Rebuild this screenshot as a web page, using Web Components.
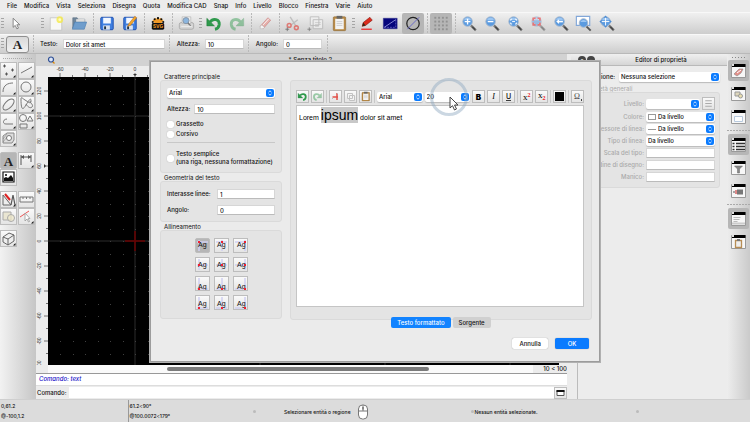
<!DOCTYPE html>
<html lang="it">
<head>
<meta charset="utf-8">
<title>Editor CAD</title>
<style>
html, body { margin: 0; height: 100%; }
body { font: 500 6px/8px Inter, "Liberation Sans", sans-serif; color: #111; background: #ebebeb; overflow: hidden; }
</style>
</head>
<body>
<cad-app></cad-app>
<script>
const lens = (inner, o = 1) => `<g opacity="${o}"><path d="M13 13l5.200 5.200" stroke="#777" stroke-width="2.400"/><path d="M14.500 14.500l3 3" stroke="#444" stroke-width="1.400"/><circle cx="9.500" cy="9" r="5" fill="#5b9be0" stroke="#a9b9cc" stroke-width="1"/><path d="M5.500 7.500a4.300 4.300 0 0 1 8 0z" fill="#9cc6f2"/>${inner}</g>`;
const win = inner => `<path d="M3.500 4.500h14v13h-14z" fill="#f7f7f7" stroke="#999"/><path d="M4 4h13.500v3H4z" fill="#000"/><path d="M4 4h2v2H4z" fill="#ddd"/>${inner}`;
const tick = '<path d="M15.500 13v2.500H13z" fill="#111"/>';
const line = (d, w = 1, c = '#777') => `<path d="${d}" fill="none" stroke="${c}" stroke-width="${w}"/>`;
const green = (d, head) => `<path d="${d}" fill="none" stroke="#2f9a4c" stroke-width="3"/><path d="${head}" fill="#2f9a4c" stroke="#1f7a39" stroke-width=".5"/>`;
const undo = green('M7 9.500c3-4.500 10-3 9.500 2.500c-.3 2.500-2 4.500-4.500 5', 'M3.500 5.500v8h8z');
const clip = '<rect x="5" y="4" width="13" height="14.500" rx="1" fill="#b98a45" stroke="#8a6530" stroke-width=".6"/><path d="M7 6h9v11H7z" fill="#f3f3f3"/><path d="M8.500 3h6v3h-6z" fill="#666"/>' + line('M8.500 9h6M8.500 11h6M8.500 13h6', .5, '#aaa');
const floppy = '<rect x="4.500" y="4.500" width="13" height="13" rx="1" fill="#3f7fe0" stroke="#1d4fae"/><path d="M7 5h8v6H7z" fill="#f2f7ff"/><path d="M7 13h7v4.500H7z" fill="#dbe3ef"/><path d="M8 14h2v3H8z" fill="#234"/>';
const scissors = c => line('M8 4l6 9.500M16 7L9 12.500', 1.400, '#b0b0b0') + `<g fill="none" stroke="${c}" stroke-width="1.600"><circle cx="7" cy="13" r="2"/><circle cx="14.500" cy="15.500" r="2"/></g>`;
const ICONS = {
  pointer: ['0 0 22 22', '<path d="M8 5.500v9.500l2.200-2 1.700 3.600 1.700-.8-1.700-3.500h3z" fill="#fff" stroke="#777" stroke-width=".9"/>'],
  new: ['0 0 22 22', '<path d="M5 5h12v13H5z" fill="#f8f8f6" stroke="#bbb" stroke-width=".7"/><circle cx="15" cy="7" r="3.500" fill="#f5ea48" opacity=".8"/><circle cx="15" cy="7" r="1.500" fill="#fffbc0"/>'],
  open: ['0 0 22 22', '<path d="M4.500 16V5h4.500l1 1.500h7V10H7z" fill="#72879b" stroke="#566b80" stroke-width=".6"/><path d="M8 6.500l9-.5v4H8z" fill="#ddd"/><path d="M6.500 9.500H19L16.500 17H4z" fill="#6f9dcc" stroke="#4779ac" stroke-width=".6"/>'],
  save: ['0 0 22 22', floppy],
  saveas: ['0 0 22 22', floppy + '<path d="M8.500 14l1-2.500 6.500-8 2 1.500-6.500 8z" fill="#f3a72c" stroke="#a85c10" stroke-width=".5"/>'],
  svg: ['0 0 22 22', '<g stroke="#f09a25" stroke-width="2.200" stroke-linecap="round"><path d="M11 12V6M11 12L6.500 8M11 12l4.500-4M11 12L8.500 6.500M11 12l2.500-5.500"/></g><g fill="#111"><circle cx="11" cy="5.500" r="1.200"/><circle cx="7.500" cy="6.500" r="1.100"/><circle cx="14.500" cy="6.500" r="1.100"/><circle cx="5.500" cy="9.500" r="1.100"/><circle cx="16.500" cy="9.500" r="1.100"/></g><rect x="4.500" y="10.500" width="13" height="7" rx="1.500" fill="#111"/><text x="11" y="16" text-anchor="middle" font-size="5" font-weight="700" fill="#f09a25">SVG</text>'],
  print: ['0 0 22 22', '<rect x="4" y="10" width="15" height="7" rx="2" fill="#d5d5d5" stroke="#999" stroke-width=".7"/><path d="M7 4h9v7H7z" fill="#f0f0f0" stroke="#aaa" stroke-width=".6"/><circle cx="11" cy="8" r="3.200" fill="#8bb5de" stroke="#8795a5"/><path d="M13 10.500l3 3" stroke="#777" stroke-width="1.400"/><path d="M6 14h11" stroke="#eee"/>'],
  undo: ['0 0 22 22', undo],
  redo: ['0 0 22 22', `<g transform="matrix(-1 0 0 1 21.500 0)" opacity=".45">${undo}</g>`],
  erase: ['0 0 22 22', '<g opacity=".7"><path d="M6 14l8-9 3 2.500-8 9z" fill="#ea9c95" stroke="#b55" stroke-width=".6"/><path d="M6 14l1.500-1.500 3 2.500L9 16.500H6z" fill="#fff" stroke="#999" stroke-width=".5"/><path d="M9 12.500l6-6.500" stroke="#fff"/></g>'],
  cut: ['0 0 22 22', `<g opacity=".7">${scissors('#e0524a')}</g>` + line('M3 17h4M5 15v4', .8, '#666')],
  cutSmall: ['0 0 13 13', line('M8 3v7M9 7H3.500', 1.500, '#e2524a') + line('M4 8l-1 1M8 3l1 1', 1, '#bbb')],
  copySmall: ['0 0 13 13', '<path d="M3.500 3.500h5v5h-5zM5.500 5.500h5v5h-5z" fill="#f4f4f4" stroke="#c2c2c2"/>'],
  copy: ['0 0 22 22', '<g opacity=".65"><path d="M5 4h9v9H5zM8 7h10v9.500H8z" fill="#f2f2f2" stroke="#aaa"/>' + line('M10 10h6M10 12h6M10 14h4', .6, '#aaa') + '</g>' + line('M2 17h4M4 15v4', .8, '#777')],
  paste: ['0 0 22 22', clip],
  pencil: ['0 0 22 22', '<path d="M6 14l1-4 7-5.500 2.500 3L9.500 13z" fill="#dd2b1c" stroke="#7e1710" stroke-width=".6"/><path d="M6 14l1-4 2.500 3z" fill="#3b2412"/><path d="M5 17h11" stroke="#e22" stroke-width="1.300"/>'],
  draft: ['0 0 22 22', '<path d="M4 5.500h14.500v11H4z" fill="#05057c" stroke="#33338c" stroke-width=".5"/><path d="M5 15L17 7" stroke="#a9a9f0" stroke-width=".8"/><path d="M5 15h12V7" fill="none" stroke="#8888d8" stroke-width=".6" stroke-dasharray="2 1"/>'],
  diameter: ['0 0 22 22', '<circle cx="11" cy="11" r="6.500" fill="none" stroke="#222" stroke-width="1.300"/><path d="M5 17L17.500 4.500" stroke="#6868c8" stroke-width="1"/>'],
  grid: ['0 0 22 22', [4, 8, 12, 16].map(x => [5, 9, 13, 17].map(y => `<rect x="${x}" y="${y - 1}" width="2" height="2" fill="#929292"/>`).join('')).join('')],
  zin: ['0 0 22 22', lens('<path d="M9.500 6v6M6.500 9h6" stroke="#fff" stroke-width="1.400"/>')],
  zout: ['0 0 22 22', lens('<path d="M6.500 9h6" stroke="#fff" stroke-width="1.400"/>')],
  zfit: ['0 0 22 22', lens('<path d="M6.500 8V6.500H8M11 6.500h1.500V8M12.500 10v1.500H11M8 11.500H6.500V10M8 9h3" fill="none" stroke="#fff"/>')],
  zsel: ['0 0 22 22', `<g opacity=".55">${lens('<path d="M6 8V5.500h2.500M10.500 5.500H13V8M13 10v2.500h-2.500M8.500 12.500H6V10" fill="#fff" stroke="#f02020" stroke-width="1.800"/>')}</g>`],
  zprev: ['0 0 22 22', lens('<path d="M13 9H8" stroke="#fff" stroke-width="1.600"/><path d="M6 9l3-2.500v5z" fill="#fff"/>')],
  zwin: ['0 0 22 22', '<path d="M3 3.500h14v9.500H3z" fill="#fff" stroke="#82a7d8" stroke-width="1.200"/><path d="M13.500 14l4.500 4.500" stroke="#555" stroke-width="2"/><circle cx="10.500" cy="10.500" r="4.500" fill="#5b9be0" stroke="#a9b9cc"/><path d="M7 9.500a4 4 0 0 1 7 0z" fill="#9cc6f2"/>'],
  zpan: ['0 0 22 22', lens('<path d="M9.500 4v10M4.500 9h10" stroke="#fff"/><path d="M9.500 2.500l2 2.500h-4zM9.500 15.500l2-2.500h-4zM3 9l2.500-2v4zM16 9l-2.500-2v4z" fill="#4a8bd4"/>')],
  text: ['0 0 22 16', '<text x="11" y="13" text-anchor="middle" font-family="Liberation Serif, serif" font-weight="700" font-size="14" fill="#222">A</text>'],
  points: ['0 0 17 17', line('M3 4h3M4.500 2.500v3M11 8h3M12.500 6.500v3M5 12h3M6.500 10.500v3', 1, '#555') + tick],
  line: ['0 0 17 17', line('M3 11L14 5') + tick],
  arc: ['0 0 17 17', line('M3 13C3 6 8 4 13 4') + tick],
  circle: ['0 0 17 17', '<circle cx="8" cy="8" r="5" fill="none" stroke="#777"/>' + tick],
  ellipse: ['0 0 17 17', '<ellipse cx="8.500" cy="8.500" rx="7" ry="3.500" transform="rotate(-45 8.500 8.500)" fill="none" stroke="#777"/>' + tick],
  spline: ['0 0 17 17', line('M3 3c0 12 2 11 5 6s5-8 5-4-4 0-6-1-4-4-4-1M8 8c1 2 4 5 6 3s-2-4-2-6') + tick],
  poly: ['0 0 17 17', line('M13 11H6c-4 0-3-5 1-5') + tick],
  shapes: ['0 0 17 17', '<g fill="none" stroke="#777"><circle cx="5" cy="5" r="3.500"/><path d="M9 8l3-5 3 5zM2 11h7v4H2z"/></g>' + tick],
  hatch: ['0 0 17 17', '<path d="M3 6l4-3h7v7l-2 3H3z" fill="#ddd" stroke="#888"/><circle cx="9" cy="8" r="2.500" fill="#fff" stroke="#777"/>' + line('M3 9l4-5M3 12l4-5', .5) + tick],
  letter: ['0 0 17 17', '<text x="8.500" y="13.500" text-anchor="middle" font-family="Liberation Serif, serif" font-weight="700" font-size="13" fill="#222">A</text>'],
  dim: ['0 0 17 17', line('M3 3v10M13 3v7M3 5h10', 1, '#555') + '<path d="M3 5l3-2v4zM13 5l-3-2v4z" fill="#555"/>' + tick],
  image: ['0 0 17 17', '<path d="M3 3h11v10H3z" fill="#fff" stroke="#111" stroke-width="1.200"/><path d="M4 12V9l2-1 2 1 3-3 2 3v3z" fill="#111"/><circle cx="6" cy="6" r="1"/>'],
  tools: ['0 0 17 17', '<path d="M3 4v10h8z" fill="#eee" stroke="#666"/><path d="M5 3l5 6" stroke="#d22" stroke-width="2"/>' + line('M11 14l2-10 2 10', 1.200, '#555') + tick],
  ruler: ['0 0 17 17', '<path d="M2 6h13v5H2z" fill="#f3f3f3" stroke="#777"/>' + line('M5 6v2M8.500 6v2M12 6v2')],
  boolean: ['0 0 17 17', '<path d="M3 4h8v8H3z" fill="#eae6d2" stroke="#aaa"/><circle cx="11" cy="10" r="3.500" fill="#f0e8c8" fill-opacity=".7" stroke="#aaa"/>'],
  pick: ['0 0 17 17', line('M2 9l9-6', 1, '#e55') + '<path d="M7 5v8l2-2 1.500 3 1-.5-1.300-3H12z" fill="#fff" stroke="#999" stroke-width=".8"/>' + tick],
  box: ['0 0 17 17', '<path d="M3 7l6-4 5 2v6l-6 4-5-3zM3 7l5 2 6-4M8 9v6" fill="#eee" stroke="#666"/>' + tick],
  wLayer: ['0 0 21 21', win('<path d="M6 14l5-5h4l-2 4-4 3z" fill="#e48f89" stroke="#888" stroke-width=".6"/><path d="M9 13l4-3" stroke="#fff"/>')],
  wBlock: ['0 0 21 21', win('<path d="M7 9h5v4H7z" fill="#ddd6bc" stroke="#999"/><circle cx="12.500" cy="13" r="2" fill="#eadfae" stroke="#999"/>')],
  wView: ['0 0 21 21', win('<path d="M6.500 10.500h8v5h-8z" fill="#fff" stroke="#b7c9dd"/>')],
  wList: ['0 0 21 21', win('<path d="M8 9.500h9M8 12.500h9M8 15.500h9" stroke="#333" stroke-width="1.300"/><path d="M4.500 9.500h2M4.500 12.500h2M4.500 15.500h2" stroke="#333" stroke-width="1.300"/>')],
  wFilter: ['0 0 21 21', win('<path d="M6.500 9h8l-3 3v4h-2v-4z" fill="#888" stroke="#666" stroke-width=".5"/>')],
  wLib: ['0 0 21 21', win('<path d="M7 10h3v4H7z" fill="#d88"/><path d="M9 9.500h6v5H9z" fill="#777"/><path d="M5 12h2" stroke="#555"/>')],
  wCmd: ['0 0 21 21', win('<path d="M5.500 9.500h7M5.500 11.500h6M5.500 13.500h4" stroke="#bbb"/><path d="M4 15.500h13" stroke="#ccc" stroke-width="2"/>')],
  wClip: ['0 0 21 21', win('<path d="M7.500 9.500h6v7h-6z" fill="#eee" stroke="#b78d55" stroke-width="1.300"/><path d="M9 8h3v2H9z" fill="#777"/>')],
  lines: ['0 0 12 12', line('M3 3.500h6M3 6h6M3 8.500h6', 1, '#aaa')],
  window: ['0 0 12 12', '<path d="M2.500 3.500h7v5h-7z" fill="#fff" stroke="#555"/><path d="M2 3h8v2H2z" fill="#111"/>'],
  bold: ['0 0 13 13', '<text x="6.500" y="9.500" text-anchor="middle" font-weight="900" font-size="8">B</text>'],
  italic: ['0 0 13 13', '<text x="6.500" y="9" text-anchor="middle" font-family="Liberation Serif, serif" font-style="italic" font-size="8">I</text>'],
  under: ['0 0 13 13', '<text x="6.500" y="9" text-anchor="middle" font-size="7">U</text><path d="M4 10.500h5" stroke="#111" stroke-width=".8"/>'],
  sup: ['0 0 13 13', '<text x="3" y="10" font-family="Liberation Serif, serif" font-weight="400" font-size="9">x<tspan dy="-3" font-size="6" font-weight="700" fill="#e22">2</tspan></text>'],
  sub: ['0 0 13 13', '<text x="3" y="8" font-family="Liberation Serif, serif" font-weight="400" font-size="9">x<tspan dy="2" font-size="6" font-weight="700" fill="#e22">2</tspan></text>'],
  color: ['0 0 13 13', '<path d="M2 2h9v9H2z"/>'],
  omega: ['0 0 13 13', '<text x="6" y="9" text-anchor="middle" font-family="Liberation Serif, serif" font-weight="400" font-size="8" fill="#444">Ω</text><path d="M10 9h1v2h-1z" fill="#444"/>'],
  mouse: ['0 0 12 16', '<rect x="1.500" y="1" width="9" height="14" rx="4" fill="#fff" stroke="#777"/><path d="M1.500 7h9M6 1v6" stroke="#777"/><path d="M5.500 3h1v2.500h-1z" fill="#555"/>'],
  doc: ['0 0 8 8', '<path d="M4.500 4.500l3 3" stroke="#d80" stroke-width="1.300"/><circle cx="4" cy="3.500" r="2.500" fill="#dce6f7" stroke="#2f4f94" stroke-width="1.200"/>'],
};
for (let r = 0; r < 4; r++) for (let c = 0; c < 3; c++) {
  const x = [4, 8, 12][c], y = [4, 8, 13, 13][r], ty = [9, 10, 13, 11][r], tx = [3, 3, 4][c];
  ICONS[`align${r}${c}`] = ['0 0 15 15', `<path d="M${x} 2v11" stroke="#cfcff0" stroke-width="1.500"/><path d="M2 ${y}h11" stroke="#cfcff0" stroke-width="1.500"/><text x="${tx}" y="${ty}" font-size="7" font-family="Liberation Sans, sans-serif" fill="#111">Ag</text><rect x="${x - 1}" y="${y - 1}" width="2" height="2" fill="#f02030"/>`];
}

function define(name, render) {
  customElements.define(name, class extends HTMLElement {
    connectedCallback() {
      if (this.shadowRoot) return;
      const root = this.attachShadow({ mode: 'open' });
      const t = document.createElement('template');
      t.innerHTML = '<style>*{box-sizing:border-box}button,input,select{font:inherit;color:inherit;margin:0}</style>' + render(this);
      root.append(t.content.cloneNode(true));
    }
  });
}
const attr = (e, n, d = '') => e.getAttribute(n) ?? d;

define('cad-icon', e => {
  const [box, art] = ICONS[attr(e, 'name')];
  return `<style>:host{display:block}svg{display:block;width:100%;height:100%}</style><svg viewBox="${box}" aria-hidden="true">${art}</svg>`;
});

define('cad-button', e => `<style>
:host{display:block;flex:none;width:var(--w,22px);height:var(--h,21px)}
button{display:block;width:100%;height:100%;padding:0;border:0;background:none;overflow:hidden}
cad-icon{width:100%;height:100%}
:host([framed]) button{border:1px solid #bdbdbd;background:linear-gradient(#fafafa,#e4e4e4)}
:host([framed]) cad-icon{margin:-1px;width:calc(100% + 2px);height:calc(100% + 2px)}
:host([round]) button{border:1px solid #8f8f8f;border-radius:3px;background:linear-gradient(#d9d9d9,#f1f1f1)}
:host([selected]) button{background:#b6b6b6;border-radius:2px}
</style><button type="button" aria-label="${attr(e, 'label', attr(e, 'icon'))}"><cad-icon name="${attr(e, 'icon')}"></cad-icon></button>`);

define('cad-separator', () => `<style>
:host{display:block;flex:none;width:4px;align-self:stretch;background:repeating-linear-gradient(#b9b9b9 0 2px,transparent 2px 3px) center/1px 100% no-repeat}
:host([handle]){background:repeating-linear-gradient(#a5a5a5 0 1px,transparent 1px 3px) center/3px 12px no-repeat}
:host([solid]){width:5px;background:linear-gradient(#c8c8c8,#c8c8c8) center/1px 100% no-repeat}
:host([across]){width:auto;height:3px;background:repeating-linear-gradient(90deg,#aaa 0 2px,transparent 2px 3px) center/100% 1px no-repeat}
</style>`);

define('cad-menu-bar', () => `<style>
:host{display:block;background:#ececec}
nav{display:flex;gap:7px;height:12px;padding:0 7px;align-items:center}
button{border:0;background:none;padding:0;line-height:10px}
</style><nav>${['File', 'Modifica', 'Vista', 'Seleziona', 'Disegna', 'Quota', 'Modifica CAD', 'Snap', 'Info', 'Livello', 'Blocco', 'Finestra', 'Varie', 'Aiuto'].map(m => `<button type="button">${m}</button>`).join('')}</nav>`);

define('cad-toolbar', () => `<style>
:host{display:flex;align-items:center;gap:1px;background:linear-gradient(#f0f0f0,#cdcdcd);border-top:1px solid #f8f8f8;box-sizing:border-box}
</style><slot></slot>`);

define('cad-field', e => `<style>
:host{display:flex;align-items:center;gap:var(--gap,5px);min-width:0}
label{white-space:nowrap;flex:none;width:var(--label,auto);text-align:var(--align,left);color:var(--label-color,inherit)}
input{flex:var(--grow,1 1 0);min-width:0;width:var(--field,0);height:10px;padding:0 2px;border:1px solid #d6d6d6;border-bottom-color:#bbb;background:#fff;line-height:8px}
</style><label for="f">${attr(e, 'label')}</label><input id="f" value="${attr(e, 'value')}">`);

define('cad-select', e => `<style>
:host{display:flex;align-items:center;gap:var(--gap,5px);min-width:0}
label{white-space:nowrap;flex:none;width:var(--label,auto);text-align:var(--align,left);color:var(--label-color,inherit)}
.box{position:relative;flex:1;min-width:0}
select{display:block;appearance:none;width:100%;height:10px;padding:0 10px 0 ${attr(e, 'swatch') ? 12 : 2}px;border:0;border-radius:2px;background:#fff;box-shadow:0 1px 1px #bbb;line-height:10px}
svg{position:absolute;right:1px;top:1px;width:8px;height:8px;pointer-events:none}
i{position:absolute;left:2px;top:2px;width:8px;height:6px;border:1px solid #999}
i.dash{top:5px;height:0;border-width:1px 0 0}
</style>${e.hasAttribute('label') ? `<label for="f">${attr(e, 'label')}</label>` : ''}<div class="box"><select id="f" aria-label="${attr(e, 'label', attr(e, 'name'))}"><option>${attr(e, 'value')}</option></select>${attr(e, 'swatch') ? `<i class="${attr(e, 'swatch')}"></i>` : ''}<svg viewBox="0 0 8 8"><rect width="8" height="8" rx="2" fill="#0a7bff"/><path d="M2.500 3.200L4 1.800l1.500 1.400M2.500 4.800L4 6.200l1.500-1.400" fill="none" stroke="#fff" stroke-width=".8"/></svg></div>`);

define('cad-check', () => `<style>
:host{display:block}
label{display:flex;align-items:center;gap:2px;white-space:nowrap}
input{appearance:none;width:7px;height:7px;border-radius:2px;background:#fff;box-shadow:0 0 1px #999;flex:none}
</style><label><input type="checkbox"><span><slot></slot></span></label>`);

define('cad-group', e => `<style>
:host{display:flex;flex-direction:column}
h3{margin:0 0 0 4px;font-size:6px;font-weight:400;line-height:6px;color:var(--title-color,inherit)}
section{flex:1;border:1px solid #dadada;border-radius:3px;background:#e4e4e4;padding:var(--pad,6px)}
</style>${e.hasAttribute('title-text') ? `<h3>${attr(e, 'title-text')}</h3>` : ''}<section><slot></slot></section>`);

const PALETTE = [['points', 'line', 'arc', 'circle', 'ellipse', 'spline', 'poly', 'shapes', 'hatch'], ['letter', 'dim', 'image'], ['tools', 'ruler', 'boolean', 'pick'], ['box']];
define('cad-palette', () => `<style>
:host{display:flex;flex-direction:column;gap:5px;width:36px;flex:none;background:linear-gradient(90deg,#f2f2f2,#c6c6c6);--w:17px;--h:17px}
.grip{height:2px;margin:3px 3px -2px;background:repeating-linear-gradient(90deg,#aaa 0 1px,transparent 1px 2px) center/100% 1px no-repeat}
.set{display:grid;grid-template-columns:17px 17px;column-gap:1px}
</style><div class="grip"></div>${PALETTE.map(s => `<div class="set">${s.map(i => `<cad-button framed icon="${i}" ${i === 'letter' ? 'selected' : ''}></cad-button>`).join('')}</div>`).join('')}`);

define('cad-ruler', e => {
  const top = e.hasAttribute('top');
  let s = '';
  for (let k = top ? -6 : -12; k <= (top ? 32 : 16); k++) {
    if (top) {
      const x = 87 + k * 12.5;
      s += `<path d="M${x} ${k % 2 ? 9 : 7}V11" stroke="#555" stroke-width=".8"/>`;
      if (k % 2 === 0) s += `<text x="${x}" y="5" text-anchor="middle">${k * 10}</text>`;
    } else {
      const y = 164 + k * 12.5;
      s += `<path d="M${k % 2 ? 10 : 8} ${y}H12" stroke="#555" stroke-width=".8"/>`;
      if (k % 2 === 0 && k <= 10) s += `<text transform="translate(5 ${y}) rotate(-90)" text-anchor="${k === 10 ? 'start' : 'middle'}">${k === 10 ? '00' : k * -10}</text>`;
    }
  }
  s += top ? '<path d="M85 8h4l-2 2z"/>' : '<path d="M8 87l2 2-2 2z"/>';
  return `<style>:host{display:block;background:#ececec;overflow:hidden;min-height:0;min-width:0;contain:size}svg{display:block;width:100%;height:100%;font:5px "Liberation Sans",sans-serif;fill:#333}</style><svg>${s}</svg>`;
});

define('cad-drawing', () => {
  let s = '';
  for (let i = 0; i < 10; i++) s += `<path d="M${87 + i * 125} 0V2000M0 ${39 + i * 125}H3000" stroke="#161616" stroke-width="2"/>`;
  for (let i = -6; i < 80; i++) for (let j = -13; j < 40; j++) s += `<rect x="${Math.round(87 + i * 12.5)}" y="${Math.round(164 + j * 12.5)}" width="1" height="1" fill="#404040"/>`;
  s += '<path d="M77 164h20M87 154v20" stroke="#6a0000" stroke-width="1.500"/>';
  return `<style>:host{display:block;background:#000;overflow:hidden;min-width:0;min-height:0;contain:size}svg{display:block;width:100%;height:100%}</style><svg>${s}</svg>`;
});

define('cad-workspace', () => `<style>
:host{display:flex;flex-direction:column;flex:1;min-width:0;background:#ececec}
header{flex:none;height:12px;background:#d2d2d2;display:grid;grid-template-columns:27fr auto 25fr;align-items:center;padding:0 11px}
header cad-icon{width:8px;height:8px}
.view{flex:1;min-height:0;display:grid;grid-template:11px 1fr / 12px 1fr 8px}
.right{grid-row:1 / 3;grid-column:3}
.scroll{flex:none;display:flex;align-items:center;height:8px;padding-left:12px}
.track{flex:1;display:flex;background:#fafafa;height:8px;align-items:center;padding:0 20% 0 23%}
.thumb{flex:1;height:4px;border-radius:2px;background:#7b7b7b}
.scale{padding-left:10px;line-height:8px}
.log{flex:none;height:12px;border-top:1px solid #999;background:#fff;color:#1a12c8;font-style:italic;padding:1px 3px;line-height:8px}
.cmd{flex:none;display:flex;height:14px;align-items:center;border-top:1px solid #ddd;padding-left:1px;--w:13px;--h:12px}
.cmd input{flex:1;min-width:0;height:11px;border:0;margin-left:2px;background:#fff}
</style>
<header><cad-icon name="doc"></cad-icon><span>* Senza titolo 2</span><span></span></header>
<div class="view"><span></span><cad-ruler top></cad-ruler><span class="right"></span><cad-ruler></cad-ruler><cad-drawing></cad-drawing></div>
<div class="scroll"><div class="track"><div class="thumb"></div></div><span class="scale">10 &lt; 100</span></div>
<div class="log">Comando: text</div>
<div class="cmd"><label for="c">Comando:</label><input id="c"><cad-button framed icon="window"></cad-button></div>`);

define('cad-properties', () => `<style>
:host{display:flex;flex-direction:column;flex:none;width:160px;background:#ececec}
header{display:grid;grid-template-columns:34px 1fr 10px;height:12px;align-items:center;text-align:center;background:linear-gradient(#f0f0f0,#d5d5d5);border-bottom:1px solid #b9b9b9;margin-left:4px}
header span:first-child{display:flex;gap:1px;padding-left:7px}
header button{width:8px;height:8px;border:0;border-radius:4px;background:#444;color:#fff;padding:0;font-size:5px;line-height:8px;flex:none}
.body{border-left:1px solid #bbb;margin-left:10px;padding:6px 7px 0 0;flex:1}
.sel{--label:37px;--align:right;--gap:4px}
cad-group{--title-color:#aaa;--pad:4px 4px 5px 0;margin-top:4px}
.rows{display:grid;grid-template-columns:minmax(0,1fr);gap:2px;--label:65px;--gap:2px;--align:right;--label-color:#aaa}
.level{display:flex;gap:2px;align-items:center;--w:13px;--h:13px}
.level cad-select{flex:1}
</style>
<header><span><button type="button" aria-label="Sgancia">o</button><button type="button" aria-label="Chiudi">×</button></span><span>Editor di proprietà</span><span></span></header>
<div class="body"><cad-select class="sel" label="Selezione:" value="Nessuna selezione"></cad-select>
<cad-group title-text="Proprietà generali"><div class="rows">
<div class="level"><cad-select label="Livello:" value=""></cad-select><cad-button framed icon="lines"></cad-button></div>
<cad-select label="Colore:" value="Da livello" swatch="chip"></cad-select>
<cad-select label="Spessore di linea:" value="Da livello" swatch="dash"></cad-select>
<cad-select label="Tipo di linea:" value="Da livello"></cad-select>
<cad-field label="Scala del tipo:"></cad-field><cad-field label="Ordine di disegno:"></cad-field><cad-field label="Manico:"></cad-field>
</div></cad-group></div>`);

define('cad-dock', () => `<style>
:host{display:flex;flex-direction:column;align-items:center;gap:2px;flex:none;width:23px;padding-top:1px;background:linear-gradient(90deg,#ededed,#cacaca);--w:21px;--h:21px}
.grip{width:14px;height:5px;background:repeating-linear-gradient(90deg,#888 0 1px,transparent 1px 3px) center/100% 1px no-repeat;margin-bottom:-2px}
cad-separator{align-self:stretch}
</style><div class="grip"></div>${['wLayer*', 'wBlock', 'wView', '-', 'wList*', 'wFilter', 'wLib', '-', 'wCmd*', 'wClip'].map(n => n === '-' ? '<cad-separator across></cad-separator>' : `<cad-button icon="${n.replace('*', '')}" ${n.includes('*') ? 'selected' : ''}></cad-button>`).join('')}`);

define('cad-status', () => `<style>
:host{display:grid;grid-template-columns:17fr 17fr 29fr 22fr 15fr;height:23px;flex:none;background:#dcdcdc;border-top:1px solid #cfcfcf;font-size:5px;line-height:10px;box-sizing:border-box}
div{display:flex;align-items:center;gap:8px;padding-top:1px}
.xy{flex-direction:column;align-items:flex-start;gap:0;padding-left:1px}
.xy + .xy{border-left:1px solid #999;padding-left:1px}
.dot::before{content:"";width:3px;height:3px;border-radius:2px;background:#bbb;margin-left:-2px}
.hint::before{margin-right:22px}
.hint{gap:6px}
.info{gap:1px}
cad-icon{width:12px;height:16px}
</style><div class="xy"><span>0,61.2</span><span>@-100,1.2</span></div><div class="xy"><span>61.2&lt;90°</span><span>@100.0072&lt;179°</span></div>
<div class="dot hint"><span>Selezionare entità o regione</span><cad-icon name="mouse"></cad-icon></div><div class="dot info">Nessun entità selezionate.</div><div class="dot"></div>`);

define('cad-text-form', () => `<style>
:host{display:flex;flex-direction:column;gap:2px;width:122px;flex:none}
.font{--pad:7px 6px 6px;--gap:4px}
.stack{display:grid;grid-template-columns:minmax(0,1fr);gap:6px}
.checks{display:grid;gap:2px}
hr{width:100%;margin:-2px 0 0;border:0;border-top:1px solid #c8c8c8}
.geo{--pad:7px 6px 6px;--label:50px;--gap:0px}
.align{--pad:7px 6px 8px;--w:15px;--h:15px}
.grid{display:grid;grid-template-columns:repeat(3,15px);gap:4px;justify-content:center}
</style>
<cad-group class="font" title-text="Carattere principale"><div class="stack"><cad-select name="Carattere" value="Arial"></cad-select><cad-field label="Altezza:" value="10"></cad-field>
<div class="checks"><cad-check>Grassetto</cad-check><cad-check>Corsivo</cad-check></div><hr><cad-check>Testo semplice<br>(una riga, nessuna formattazione)</cad-check></div></cad-group>
<cad-group class="geo" title-text="Geometria del testo"><div class="stack"><cad-field label="Interasse linee:" value="1"></cad-field><cad-field label="Angolo:" value="0"></cad-field></div></cad-group>
<cad-group class="align" title-text="Allineamento"><div class="grid">${[0, 1, 2, 3].map(r => [0, 1, 2].map(c => `<cad-button framed icon="align${r}${c}" ${r + c ? '' : 'selected'}></cad-button>`).join('')).join('')}</div></cad-group>`);

define('cad-rich-editor', () => `<style>
:host{display:flex;flex-direction:column;flex:1;min-width:0}
cad-group{flex:1;margin-top:6px;--pad:9px 7px 12px 5px}
.bar{display:flex;align-items:center;gap:2px;--w:13px;--h:13px;margin-bottom:2px}
.bar cad-separator{width:1px;height:13px}
.bar .face{flex:1}
.bar .size{flex:1}
.edit{height:202px;background:#fff;border:1px solid #c5c5c5;padding:1px 2px;font:7px/18px "Liberation Sans",Arial,sans-serif;color:#000}
.edit b{font-weight:400;font-size:14px;line-height:16px;background:#c8c8c8}
.tabs{display:flex;justify-content:center;gap:2px;margin-top:-3px;position:relative}
.tabs button{height:11px;border:0;border-radius:2px;padding:0 6px;background:#d0d0d0;line-height:11px}
.tabs [aria-selected=true]{background:#1283ff;color:#fff}
.focus{position:absolute;left:270px;top:4px;width:38px;height:38px;border:3px solid #8fa9c077;border-radius:50%;pointer-events:none}
.focus svg{position:absolute;left:16px;top:15px;width:10px;height:15px}
</style>
<cad-group><div class="bar"><cad-button framed icon="undo"></cad-button><cad-button framed icon="redo"></cad-button><cad-separator solid></cad-separator><cad-button framed icon="cutSmall"></cad-button><cad-button framed icon="copySmall"></cad-button><cad-button framed icon="paste"></cad-button><cad-separator solid></cad-separator>
<cad-select class="face" name="Carattere" value="Arial"></cad-select><cad-select class="size" name="Dimensione" value="20"></cad-select>
<cad-button framed icon="bold"></cad-button><cad-button framed icon="italic"></cad-button><cad-button framed icon="under"></cad-button><cad-separator solid></cad-separator><cad-button framed icon="sup"></cad-button><cad-button framed icon="sub"></cad-button><cad-separator solid></cad-separator><cad-button framed icon="color"></cad-button><cad-separator solid></cad-separator><cad-button framed icon="omega"></cad-button></div>
<div class="edit" contenteditable="true" role="textbox" aria-label="Testo" spellcheck="false">Lorem <b>ipsum</b> dolor sit amet</div></cad-group>
<div class="tabs" role="tablist"><button type="button" role="tab" aria-selected="true">Testo formattato</button><button type="button" role="tab" aria-selected="false">Sorgente</button></div>
<div class="focus"><svg viewBox="0 0 10 15"><path d="M1 1v11l2.500-2.300L5.500 14l2-1-2-4H9z" fill="#fff" stroke="#444"/></svg></div>`);

define('cad-text-dialog', () => `<style>
:host{position:absolute;top:61px;left:150px;right:150px;display:block}
dialog{display:block;position:relative;width:100%;margin:0;padding:12px 7px 12px 9px;border:1px solid #9c9c9c;background:#ebebeb;color:inherit;box-shadow:0 0 0 1px #b0b0b0}
.cols{display:flex;gap:8px;position:relative}
footer{display:flex;justify-content:flex-end;gap:7px;margin-top:10px;padding-right:3px}
footer button{height:11px;min-width:34px;padding:0 7px;border:0;border-radius:2px;background:#fff;box-shadow:0 0 1px #888;line-height:11px}
footer .ok{background:#0a7bff;color:#fff}
</style><dialog open aria-label="Testo"><div class="cols"><cad-text-form></cad-text-form><cad-rich-editor></cad-rich-editor></div>
<footer><button type="button">Annulla</button><button type="button" class="ok">OK</button></footer></dialog>`);

const B = names => names.split(' ').map(n => n === '|' ? '<cad-separator></cad-separator>' : n === ':' ? '<cad-separator handle></cad-separator>' : `<cad-button icon="${n.replace('*', '')}" ${n.includes('*') ? 'selected' : ''}></cad-button>`).join('');
define('cad-app', () => `<style>
:host{display:flex;flex-direction:column;height:100vh;position:relative}
.tools{height:22px}
.tools cad-button:nth-child(2){margin-right:12px}
.options{height:20px;border-bottom:1px solid #b9b9b9}
.options cad-button{--w:23px;--h:17px;margin:0 1px}
.options cad-field{--gap:5px;--grow:none;margin:0 2px 0 4px}
.long{--field:102px}.short{--field:39px}
main{flex:1;min-height:0;display:flex}
</style>
<cad-menu-bar></cad-menu-bar>
<cad-toolbar class="tools">${B(': pointer : new open | save saveas | svg | print : undo redo | erase | cut copy paste : pencil draft diameter* | grid* | zin zout zfit zsel zprev zwin zpan')}</cad-toolbar>
<cad-toolbar class="options"><cad-separator handle></cad-separator><cad-button round icon="text" label="Testo"></cad-button><cad-separator></cad-separator><cad-field class="long" label="Testo:" value="Dolor sit amet"></cad-field><cad-separator></cad-separator><cad-field class="short" label="Altezza:" value="10"></cad-field><cad-separator></cad-separator><cad-field class="short" label="Angolo:" value="0"></cad-field><cad-separator></cad-separator></cad-toolbar>
<main><cad-palette></cad-palette><cad-workspace></cad-workspace><cad-properties></cad-properties><cad-dock></cad-dock></main>
<cad-status></cad-status>
<cad-text-dialog></cad-text-dialog>`);
</script>
</body>
</html>
